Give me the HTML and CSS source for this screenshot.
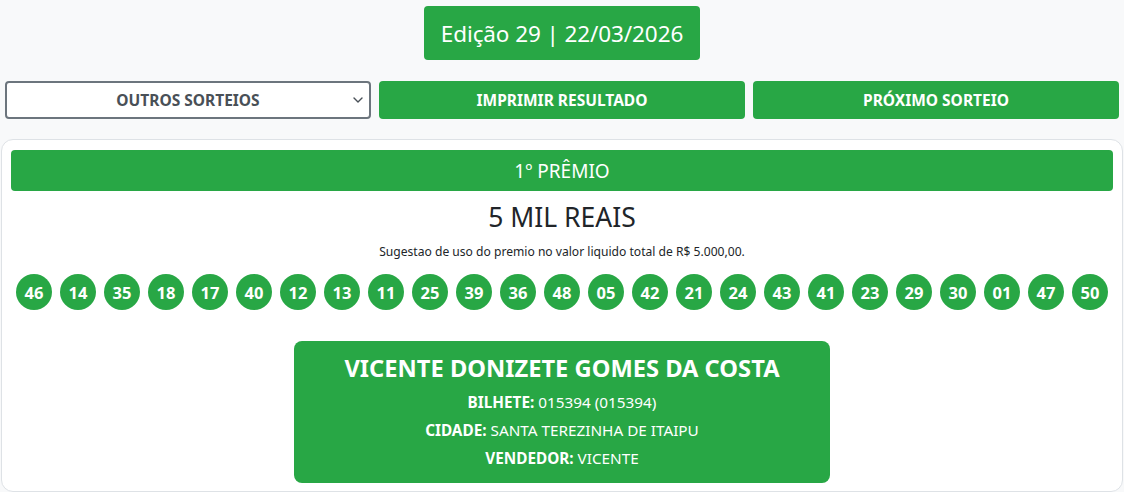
FILE: index.html
```html
<!DOCTYPE html>
<html lang="pt-BR">
<head>
<meta charset="utf-8">
<title>Resultado</title>
<link rel="stylesheet" href="styles.css">
</head>
<body>
<div class="top">
  <div class="edition">Edição 29 | 22/03/2026</div>
</div>
<div class="actions">
  <div class="select-wrap">
    <select class="select">
      <option>OUTROS SORTEIOS</option>
    </select>
    <svg class="chev" width="10" height="6" viewBox="0 0 10 6"><path d="M1 1l4 4 4-4" fill="none" stroke="#495057" stroke-width="1.4" stroke-linecap="round" stroke-linejoin="round"/></svg>
  </div>
  <button class="btn">IMPRIMIR RESULTADO</button>
  <button class="btn">PRÓXIMO SORTEIO</button>
</div>
<div class="card">
  <div class="prize-bar">1º PRÊMIO</div>
  <div class="amount">5 MIL REAIS</div>
  <div class="note">Sugestao de uso do premio no valor liquido total de R$ 5.000,00.</div>
  <div class="balls">
    <span class="ball">46</span><span class="ball">14</span><span class="ball">35</span><span class="ball">18</span><span class="ball">17</span><span class="ball">40</span><span class="ball">12</span><span class="ball">13</span><span class="ball">11</span><span class="ball">25</span><span class="ball">39</span><span class="ball">36</span><span class="ball">48</span><span class="ball">05</span><span class="ball">42</span><span class="ball">21</span><span class="ball">24</span><span class="ball">43</span><span class="ball">41</span><span class="ball">23</span><span class="ball">29</span><span class="ball">30</span><span class="ball">01</span><span class="ball">47</span><span class="ball">50</span>
  </div>
  <div class="winner">
    <div class="name">VICENTE DONIZETE GOMES DA COSTA</div>
    <div class="line"><b>BILHETE:</b> 015394 (015394)</div>
    <div class="line"><b>CIDADE:</b> SANTA TEREZINHA DE ITAIPU</div>
    <div class="line"><b>VENDEDOR:</b> VICENTE</div>
  </div>
</div>
</body>
</html>
```
FILE: styles.css
```css
* { box-sizing: border-box; }
html, body { margin: 0; padding: 0; }
body {
  background: #f8f9fa;
  font-family: "Noto Sans", "Open Sans", sans-serif;
  color: #212529;
  width: 1124px;
  height: 492px;
  overflow: hidden;
}
.top {
  display: flex;
  justify-content: center;
  padding-top: 6px;
}
.edition {
  background: #28a745;
  color: #fff;
  border-radius: 4px;
  width: 276px;
  height: 54px;
  display: flex;
  align-items: center;
  justify-content: center;
  font-size: 22.5px;
  letter-spacing: -0.1px;
}
.actions {
  display: grid;
  grid-template-columns: 1fr 1fr 1fr;
  gap: 8px;
  padding: 0 5px;
  margin-top: 21px;
}
.select-wrap { position: relative; }
.select {
  appearance: none;
  -webkit-appearance: none;
  width: 100%;
  height: 38px;
  border: 2px solid #6c757d;
  border-radius: 4px;
  background: #fff;
  color: #495057;
  font-family: inherit;
  font-weight: 700;
  font-size: 15.5px;
  text-align: center;
  text-align-last: center;
  padding: 0 20px;
}
.chev {
  position: absolute;
  right: 8px;
  top: 16px;
}
.btn {
  height: 38px;
  border: none;
  border-radius: 4px;
  background: #28a745;
  color: #fff;
  font-family: inherit;
  font-weight: 700;
  font-size: 15.5px;
  padding: 0;
}
.card {
  margin: 20px 1px 0;
  background: #fff;
  border: 1px solid #dee2e6;
  border-radius: 12px;
  padding: 10px 9px 8px;
  height: 353px;
}
.prize-bar {
  background: #28a745;
  color: #fff;
  border-radius: 4px;
  height: 41px;
  display: flex;
  align-items: center;
  justify-content: center;
  font-size: 19px;
}
.amount {
  text-align: center;
  font-size: 26.5px;
  margin-top: 9px;
  line-height: 34px;
}
.note {
  text-align: center;
  font-size: 12.1px;
  margin-top: 9px;
  line-height: 18px;
}
.balls {
  display: flex;
  justify-content: center;
  gap: 8px;
  margin-top: 13px;
}
.ball {
  width: 36px;
  height: 36px;
  border-radius: 50%;
  background: #28a745;
  color: #fff;
  font-weight: 700;
  font-size: 16.5px;
  display: flex;
  align-items: center;
  justify-content: center;
}
.winner {
  width: 536px;
  margin: 31px auto 0;
  background: #28a745;
  color: #fff;
  border-radius: 8px;
  padding: 11px 0 11px;
  text-align: center;
}
.name {
  font-weight: 700;
  font-size: 23.7px;
  line-height: 32px;
  margin-bottom: 4px;
}
.line {
  font-size: 15.3px;
  line-height: 28px;
}
```
